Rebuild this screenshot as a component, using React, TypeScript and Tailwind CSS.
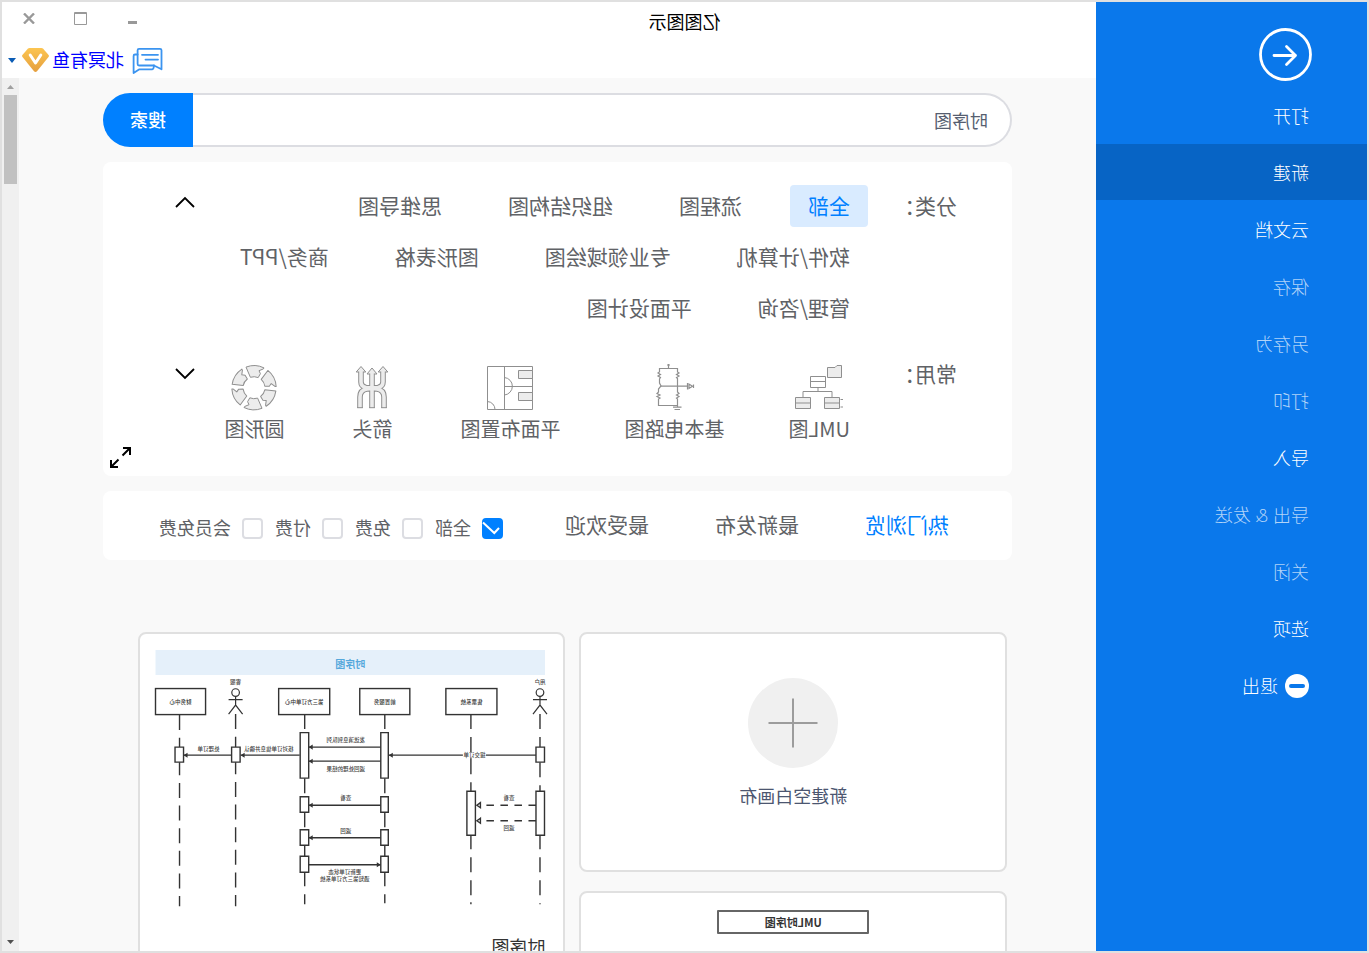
import { useState } from "react";
import type { ReactNode } from "react";

const FONT = "font-['Noto_Sans_CJK_SC','Noto_Sans',sans-serif]";

type MenuItem = { label: string; disabled?: boolean };

const MENU: MenuItem[] = [
  { label: "打开" },
  { label: "新建" },
  { label: "云文档" },
  { label: "保存", disabled: true },
  { label: "另存为", disabled: true },
  { label: "打印", disabled: true },
  { label: "导入" },
  { label: "导出 & 发送", disabled: true },
  { label: "关闭", disabled: true },
  { label: "选项" },
];

const CATEGORIES = [
  "全部",
  "流程图",
  "组织结构图",
  "思维导图",
  "软件/计算机",
  "专业领域绘图",
  "图形表格",
  "商务/PPT",
  "管理/咨询",
  "平面设计图",
];

const TABS = ["热门浏览", "最新发布", "最受欢迎"];
const PRICES = ["全部", "免费", "付费", "会员免费"];

/* ---------- icons ---------- */

function ChatIcon() {
  return (
    <svg width="31" height="28" viewBox="0 0 31 28" fill="none" stroke="#3b94f0" strokeWidth="1.8" strokeLinejoin="round" strokeLinecap="round">
      <path d="M3 1.9H24Q25.4 1.9 25.4 3.3V17Q25.4 18.5 24 18.5H9L1.5 22.3V3.3Q1.5 1.9 3 1.9Z" />
      <path d="M25.4 7.5H28Q29.4 7.5 29.4 9V26L24 22.4H11Q9.3 22.4 9 18.5" />
      <path d="M5 7.8H21M5 12.6H17.5" />
    </svg>
  );
}

function VipIcon() {
  return (
    <svg width="27" height="24" viewBox="0 0 27 24">
      <defs>
        <linearGradient id="vip" x1="0" y1="0" x2="0" y2="1">
          <stop offset="0" stopColor="#fcc551" />
          <stop offset="1" stopColor="#e59f3e" />
        </linearGradient>
      </defs>
      <path d="M7.5 0H19.5Q20.5 0 21.2 .8L26.6 7Q27.3 8 26.5 9L15 23.2Q13.5 24.6 12 23.2L.5 9Q-.3 8 .4 7L5.8 .8Q6.5 0 7.5 0Z" fill="url(#vip)" />
      <path d="M8.2 7L13.5 15L18.8 7" fill="none" stroke="#fff" strokeWidth="3" strokeLinecap="round" strokeLinejoin="round" />
    </svg>
  );
}

function UmlIcon() {
  return (
    <svg width="48" height="48" viewBox="0 0 48 48" fill="#ececec" stroke="#8f8f8f" strokeWidth="1">
      <path d="M1.5 2.5H6L8 4.5H15.5V14.5H1.5Z" />
      <path d="M17.5 13.5H32.5V24.5H17.5Z" fill="#fff" />
      <path d="M17.5 18.5H32.5M25 24.5V28.5M11 34V28.5H40V34" fill="none" />
      <path d="M3.5 34.5H18.5V45.5H3.5ZM32.5 34.5H47.5V45.5H32.5Z" />
      <path d="M3.5 40H18.5M32.5 40H47.5M0 36.5H2.5M0 44H2.5" />
    </svg>
  );
}

function CircuitIcon() {
  return (
    <svg width="48" height="48" viewBox="0 0 48 48" fill="none" stroke="#8f8f8f" strokeWidth="1.2">
      <path d="M29.5 1V5.5M28 2H31" />
      <path d="M38.5 9V5.5H20.5V9L19 10L21.5 11.5L19 13L21.5 14.5L20.5 15.5V29L19 30.5L21.5 32L19 33.5L21.5 35L20.5 36V44" />
      <path d="M38.5 9L40 10L37.5 11.5L40 13L37.5 14.5L38.5 16V20L37 23L39.5 26V29L41 30.5L38 32L41 33.5L38 35L39.5 36V42.5H20.5" />
      <path d="M37 23.2H10.5M10.5 20V26.5M9 21V25.5L5.5 23.2ZM4.5 21.5V25" />
      <path d="M16.5 44.2H25M18 46.5H23.5" />
    </svg>
  );
}

function FloorIcon() {
  return (
    <svg width="48" height="48" viewBox="0 0 48 48" fill="none" stroke="#8f8f8f" strokeWidth="1">
      <path d="M1.5 3.5H46.5V46.5H1.5ZM29.5 3.5V46.5M1.5 23.5H29.5" />
      <path d="M1.5 7.5H15.5V15.5H1.5ZM1.5 29.5H15.5V37.5H1.5Z" fill="#ececec" />
      <path d="M29.5 14.5A8.8 8.8 0 0 0 29.5 32M46.5 38.5A8 8 0 0 0 39 46.5" />
    </svg>
  );
}

const ARROW_LINES = "M24 45V10M13 8V19Q13 23.5 18 24.5Q24 25 24 25Q24 25 30 24.5Q35 23.5 35 19V8M12 45V34Q12 27 19 26Q24 25.5 24 25.5Q24 25.5 29 26Q36 27 36 34V45";

function ArrowsIcon() {
  return (
    <svg width="48" height="48" viewBox="0 0 48 48" fill="none">
      <path d={ARROW_LINES} stroke="#8f8f8f" strokeWidth="5.6" />
      <path d="M24 5L29 11H19ZM13 3.5L17.8 9H8.2ZM35 3.5L39.8 9H30.2Z" fill="#ececec" stroke="#8f8f8f" />
      <path d={ARROW_LINES} stroke="#ececec" strokeWidth="3.6" />
      <path d="M9.2 44.7H14.8M21.2 44.7H26.8M33.2 44.7H38.8" stroke="#8f8f8f" />
    </svg>
  );
}

function RingIcon() {
  return (
    <svg width="48" height="48" viewBox="0 0 48 48" fill="#ececec" stroke="#8f8f8f" strokeWidth="1" strokeLinejoin="round">
      {[0, 60, 120, 180, 240, 300].map((deg) => (
        <path
          key={deg}
          transform={`translate(24 24.7) rotate(${deg})`}
          d="M8 -20.6A22.2 22.2 0 0 0 -10 -19.8L-9.4 -18.8L-5 -17L-6.4 -14L-4.2 -10.1A11 11 0 0 1 3.6 -10.4Z"
        />
      ))}
    </svg>
  );
}

const COMMON: { label: string; icon: ReactNode }[] = [
  { label: "UML图", icon: <UmlIcon /> },
  { label: "基本电路图", icon: <CircuitIcon /> },
  { label: "平面布置图", icon: <FloorIcon /> },
  { label: "箭头", icon: <ArrowsIcon /> },
  { label: "圆形图", icon: <RingIcon /> },
];

/* ---------- sequence diagram thumbnail ---------- */

const BOXES = [
  { x: 48, w: 51, text: "售票系统" },
  { x: 135, w: 50, text: "前置服务" },
  { x: 215, w: 51, text: "第三方订单中心" },
  { x: 339, w: 50, text: "财务中心" },
];

const NOTES = [
  { x: 5, y: 34, text: "用户" },
  { x: 309, y: 34, text: "客服" },
  { x: 199, y: 92, text: "发送消息到队列" },
  { x: 199, y: 121, text: "返回处理的结果" },
  { x: 276, y: 101, text: "核对订单信息并确认" },
  { x: 336, y: 101, text: "处理订单" },
  { x: 36, y: 150, text: "查看" },
  { x: 36, y: 180, text: "返回" },
  { x: 199, y: 150, text: "查看" },
  { x: 199, y: 183, text: "返回" },
  { x: 200, y: 224, text: "更新订单状态" },
  { x: 200, y: 231, text: "通知第三方订单系统" },
];

function SequenceDiagram() {
  return (
    <svg viewBox="0 0 389 260" className="block w-full overflow-visible" fill="none" stroke="#333" strokeWidth="1.4">
      <path d="M0 0H389V25H0Z" fill="#e5f0fa" stroke="none" />
      <text x="194.5" y="18" textAnchor="middle" fontSize="10" fontWeight="700" fill="#55a8dc" stroke="none">
        时序图
      </text>
      <path d="M365 65V256M309 64V256" strokeDasharray="15 7.6" />
      <path d="M240 65V79M240 128V143M240 162V177M240 195V206M240 222V236M240 244V254" />
      <path d="M160 65V79M160 128V143M160 162V177M160 195V206M160 222V236M160 244V253" />
      <path d="M74 65V79M74 87V124M74 132V141M74 185V199M74 207V222M74 230V245M74 252V254" />
      <path d="M5 64V79M5 87V97M5 112V127M5 135V141M5 185V199M5 207V222M5 230V245M5 253V254" />
      {[5, 309].map((x) => (
        <g key={x} strokeWidth="1.2">
          <circle cx={x} cy="42.5" r="3.8" />
          <path d={`M${x} 46V55M${x - 7} 49.5H${x + 7}M${x - 7} 64L${x} 55L${x + 7} 64`} />
        </g>
      ))}
      {BOXES.map((box) => (
        <g key={box.text}>
          <rect x={box.x} y="38.5" width={box.w} height="26" fill="#fff" />
          <text x={box.x + box.w / 2} y="54" textAnchor="middle" fontSize="5.5" fontWeight="500" fill="#333" stroke="none">
            {box.text}
          </text>
        </g>
      ))}
      <path d="M9 105H156M164 97H236M164 111H236M245 105H304M313 105H361M164 155H236M164 187.5H236M164 214.5H236" />
      <path d="M9 155H60M9 170.5H60" strokeDasharray="7.5 6.5" />
      <path d="M64.5 152.5L68 155L64.5 157.5ZM64.5 168L68 170.5L64.5 173Z" />
      <g fill="#333" stroke="none">
        <path d="M152 102.5L156 105L152 107.5ZM232 94.5L236 97L232 99.5ZM232 108.5L236 111L232 113.5Z" />
        <path d="M300 102.5L304 105L300 107.5ZM357 102.5L361 105L357 107.5Z" />
        <path d="M232 152.5L236 155L232 157.5ZM232 185L236 187.5L232 190ZM168 212L164 214.5L168 217Z" />
      </g>
      <g fill="#fff">
        <path d="M.5 97H9V112H.5ZM.5 141H9V185H.5ZM69.5 141H78V185H69.5Z" />
        <path d="M156.5 82.5H164V128H156.5ZM236 82.5H244.5V128H236Z" />
        <path d="M156.5 146.5H164V162H156.5ZM236 146.5H244.5V162H236Z" />
        <path d="M156.5 179.5H164V195H156.5ZM236 179.5H244.5V195H236Z" />
        <path d="M156.5 206H164V222H156.5ZM236 206H244.5V222H236Z" />
        <path d="M304.5 97H313V112H304.5ZM361 97H369.5V112H361Z" />
      </g>
      <g fill="#444" stroke="none" fontSize="5.5" fontWeight="500" textAnchor="middle">
        {NOTES.map((note) => (
          <text key={`${note.x}-${note.y}`} x={note.x} y={note.y}>
            {note.text}
          </text>
        ))}
        <path d="M59 102H82V108H59Z" fill="#fff" />
        <text x="70.5" y="107">提交订单</text>
      </g>
    </svg>
  );
}

/* ---------- layout ---------- */

function Sidebar() {
  const [active, setActive] = useState("新建");

  return (
    <aside className="w-[271px] shrink-0 bg-[#0a78eb] pt-[26px] font-['Open_Sans','Noto_Sans_CJK_SC',sans-serif] text-lg font-light text-white">
      <button aria-label="返回" className="ml-[55px] block">
        <svg width="53" height="53" viewBox="0 0 53 53" fill="none" stroke="#fff" strokeWidth="2.8" strokeLinecap="round" strokeLinejoin="round">
          <circle cx="26.5" cy="26.5" r="25" />
          <path d="M38 27.5H16.5M25.5 18.5L16.5 27.5L25.5 36.5" />
        </svg>
      </button>
      <nav className="mt-1.5 flex flex-col gap-px">
        {MENU.map((item) => (
          <button
            key={item.label}
            disabled={item.disabled}
            onClick={() => setActive(item.label)}
            className={`flex h-14 items-center pt-0.5 pl-[58px] disabled:text-white/70 ${
              item.label === active ? "bg-[#0764c5]" : ""
            }`}
          >
            {item.label}
          </button>
        ))}
        <button className="flex h-14 items-center gap-[7px] pt-0.5 pl-[58px]">
          <svg width="24" height="24" viewBox="0 0 24 24">
            <circle cx="12" cy="12" r="12" fill="#fff" />
            <rect x="4" y="10" width="16" height="4" rx="2" fill="#0a78eb" />
          </svg>
          退出
        </button>
      </nav>
    </aside>
  );
}

function TitleBar() {
  return (
    <header className="h-[76px] shrink-0 bg-white">
      <div className="flex h-10 items-center">
        <h1 className="flex-1 pb-0.5 text-center text-lg text-black">亿图图示</h1>
        <div className="flex w-[271px] items-center justify-end gap-8 pr-[17px] pb-2 text-[#999]">
          <button aria-label="最小化" className="grid h-5 w-5 place-items-center">
            <svg width="9" height="14" viewBox="0 0 9 14">
              <path d="M0 10H9V13H0Z" fill="currentColor" />
            </svg>
          </button>
          <button aria-label="最大化" className="grid h-5 w-5 place-items-center">
            <svg width="13" height="13" viewBox="0 0 13 13" fill="none" stroke="currentColor">
              <path d="M.5 .5H12.5V12.5H.5ZM0 1.5H13" />
            </svg>
          </button>
          <button aria-label="关闭" className="grid h-5 w-5 place-items-center">
            <svg width="12" height="11" viewBox="0 0 12 11" stroke="currentColor" strokeWidth="2.4">
              <path d="M1 .5L11 10.5M11 .5L1 10.5" />
            </svg>
          </button>
        </div>
      </div>
      <div className="flex h-9 items-center justify-end pr-1.5">
        <button aria-label="消息" className="mr-2 pt-0.5">
          <ChatIcon />
        </button>
        <a href="#account" className="pb-0.5 text-lg text-[#0000ff]">
          北冥有鱼
        </a>
        <span className="ml-[3px]">
          <VipIcon />
        </span>
        <button aria-label="账户菜单" className="ml-1.5">
          <svg width="8" height="5" viewBox="0 0 8 5">
            <path d="M0 0H8L4 5Z" fill="#0a5cb5" />
          </svg>
        </button>
      </div>
    </header>
  );
}

function SearchBar() {
  return (
    <form className="flex h-[54px]" onSubmit={(e) => e.preventDefault()}>
      <input
        aria-label="搜索模板"
        defaultValue="时序图"
        className="min-w-0 flex-1 rounded-l-full border-2 border-r-0 border-[#dcdde2] bg-white pl-[22px] text-lg text-[#565e70] outline-none"
      />
      <button className="w-[90px] rounded-r-full bg-[#0080ff] pb-0.5 text-lg font-medium text-white">搜索</button>
    </form>
  );
}

function Filters() {
  const [category, setCategory] = useState("全部");

  return (
    <section className="mt-[15px] rounded-lg bg-white pt-[23px] pb-2 text-[#606266]">
      <div className="flex items-start pr-[70px] pl-[55px]">
        <h2 className="w-[89px] shrink-0 text-[21px] leading-10">分类：</h2>
        <div className="flex flex-1 flex-wrap gap-x-[30px] gap-y-[9px] pr-2">
          {CATEGORIES.map((name) => (
            <button
              key={name}
              onClick={() => setCategory(name)}
              className={`rounded px-[18px] pb-0.5 text-[21px] leading-10 whitespace-nowrap ${
                name === category ? "bg-[#d9ebff] text-[#0080ff]" : ""
              }`}
            >
              {name}
            </button>
          ))}
        </div>
        <button aria-label="收起分类" className="p-0.5 pt-2.5">
          <svg width="20" height="14" viewBox="0 0 20 14" fill="none" stroke="#000" strokeWidth="1.8">
            <path d="M1 12L10 3L19 12" />
          </svg>
        </button>
      </div>
      <div className="mt-[34px] flex items-start pr-[70px] pl-[55px]">
        <h2 className="w-[107px] shrink-0 text-[21px] leading-5">常用：</h2>
        <div className="flex flex-1 gap-16">
          {COMMON.map((item) => (
            <button key={item.label} className="flex min-w-12 flex-col items-center text-xl whitespace-nowrap">
              {item.icon}
              <span className="mt-1">{item.label}</span>
            </button>
          ))}
        </div>
        <button aria-label="展开常用" className="p-0.5 pt-[5px]">
          <svg width="20" height="14" viewBox="0 0 20 14" fill="none" stroke="#000" strokeWidth="1.8">
            <path d="M1 1L10 10L19 1" />
          </svg>
        </button>
      </div>
      <div className="mt-1 flex justify-end pr-[7px]">
        <button aria-label="全部展开">
          <svg width="21" height="21" viewBox="0 0 21 21" fill="none" stroke="#000" strokeWidth="2">
            <path d="M1 8V1H8M1 1L8.5 8.5M20 13V20H13M20 20L12.5 12.5" />
          </svg>
        </button>
      </div>
    </section>
  );
}

function SortBar() {
  const [tab, setTab] = useState(TABS[0]);
  const [price, setPrice] = useState("全部");

  return (
    <section className="mt-[15px] flex h-[69px] items-center rounded-lg bg-white pl-[63px] text-[#606266]">
      <div className="flex gap-[66px] pb-0.5 text-[21px] whitespace-nowrap">
        {TABS.map((name) => (
          <button key={name} onClick={() => setTab(name)} className={name === tab ? "text-[#0080ff]" : ""}>
            {name}
          </button>
        ))}
      </div>
      <div className="ml-[62px] flex gap-3 pt-1.5 text-lg whitespace-nowrap">
        {PRICES.map((name) => (
          <label key={name} className="flex items-center gap-[11px]">
            <span className="grid size-[21px] place-items-center">
              <input
                type="checkbox"
                checked={name === price}
                onChange={() => setPrice(name)}
                className="col-start-1 row-start-1 size-[21px] appearance-none rounded border-2 border-[#dcdde2] bg-white checked:border-[#0080ff] checked:bg-[#0080ff]"
              />
              {name === price && (
                <svg className="pointer-events-none col-start-1 row-start-1" width="21" height="21" viewBox="0 0 21 21" fill="none" stroke="#fff" strokeWidth="2">
                  <path d="M4 10L8.7 15L20 4.5" />
                </svg>
              )}
            </span>
            <span className="pb-[3px]">{name}</span>
          </label>
        ))}
      </div>
    </section>
  );
}

function TemplateGrid() {
  return (
    <div className="mt-[72px] grid grid-cols-2 items-start gap-[14px] pr-[35px] pl-[5px]">
      <div className="flex flex-col gap-[19px]">
        <button className="flex h-60 flex-col items-center rounded-lg border-2 border-[#e0e0e0] bg-white pt-11 text-lg text-[#4c5670]">
          <svg width="90" height="90" viewBox="0 0 90 90" stroke="#9c9c9c" strokeWidth="2">
            <circle cx="45" cy="45" r="45" fill="#f0f0f0" stroke="none" />
            <path d="M20.5 45H69.5M45 20.5V69.5" />
          </svg>
          <span className="mt-[13px]">新建空白画布</span>
        </button>
        <article className="h-60 rounded-lg border-2 border-[#e0e0e0] bg-white pt-[17px]">
          <h3 className="mx-auto h-6 w-[152px] rounded-[1px] border-2 border-[#666] text-center text-[11px] leading-5 font-bold text-[#333]">
            UML时序图
          </h3>
        </article>
      </div>
      <article className="rounded-lg border-2 border-[#e0e0e0] bg-white pt-4 pr-4 pl-[18px]">
        <SequenceDiagram />
        <h3 className="mt-[22px] pb-6 text-lg text-[#333]">时序图</h3>
      </article>
    </div>
  );
}

function ScrollBar() {
  return (
    <div className="flex w-[17px] shrink-0 flex-col items-center bg-[#f0f0f0] pt-[7px] pb-[7px]">
      <svg width="7" height="4" viewBox="0 0 7 4">
        <path d="M0 4L3.5 0L7 4Z" fill="#a0a0a0" />
      </svg>
      <div className="mt-1.5 h-[89px] w-[13px] bg-[#c1c1c1]" />
      <svg className="mt-auto" width="7" height="4" viewBox="0 0 7 4">
        <path d="M0 0H7L3.5 4Z" fill="#505050" />
      </svg>
    </div>
  );
}

export default function App() {
  return (
    <div className={`flex h-screen -scale-x-100 overflow-hidden border-2 border-[#e0e0e0] bg-[#f9f9f9] ${FONT}`}>
      <Sidebar />
      <div className="flex min-w-0 flex-1 flex-col">
        <TitleBar />
        <div className="flex min-h-0 flex-1">
          <main className="min-w-0 flex-1 overflow-hidden px-[84px] pt-[15px]">
            <SearchBar />
            <Filters />
            <SortBar />
            <TemplateGrid />
          </main>
          <ScrollBar />
        </div>
      </div>
    </div>
  );
}
